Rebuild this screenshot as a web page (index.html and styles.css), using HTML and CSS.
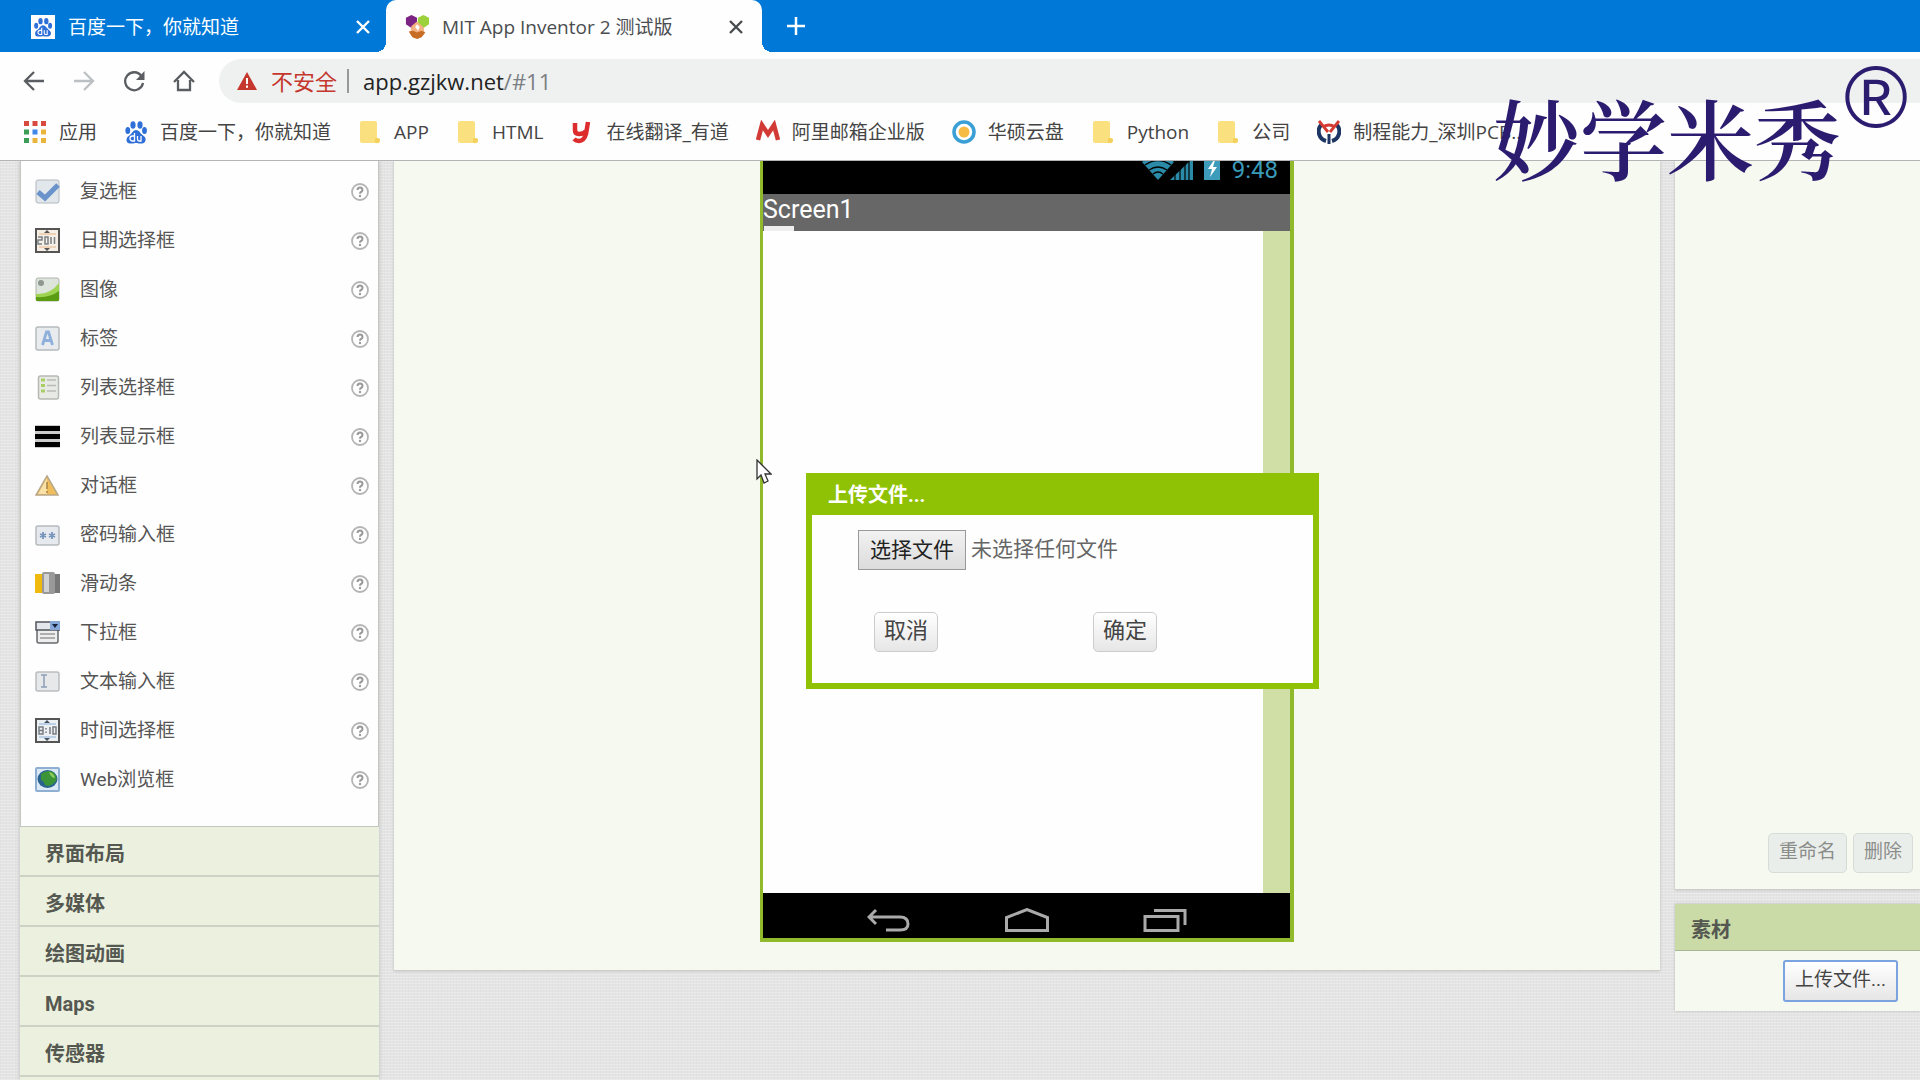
FILE: index.html
```html
<!DOCTYPE html>
<html lang="zh-CN">
<head>
<meta charset="utf-8">
<title>MIT App Inventor 2 测试版</title>
<link rel="stylesheet" href="styles.css">
</head>
<body>
<svg class="symbols" aria-hidden="true">
  <symbol id="folder" viewBox="0 0 24 24"><path d="M4 1h13q2 0 2 2v15q3 0 3 3t-4 2H4q-2 0-2-2V3q0-2 2-2z" fill="#fbe07f"/><path d="M19 18q-3 0-2 5 5 0 5-3 0-2-3-2z" fill="#f3d05c"/></symbol>
  <symbol id="paw" viewBox="0 0 24 24"><g fill="#2f6fd8"><ellipse cx="9" cy="5" rx="2.6" ry="3.8"/><ellipse cx="16" cy="5" rx="2.6" ry="3.8"/><ellipse cx="3.8" cy="10.500" rx="2.400" ry="3.500"/><ellipse cx="20.500" cy="10.500" rx="2.400" ry="3.500"/><path d="M12 10c3 0 4 3 6.500 5s3.500 3 3 5.500-2.500 3-5 3-3-.5-4.500-.5-2 .5-4.500.5-5-.5-5-3.500 1.500-3.500 3.500-5 3-5 6-5z"/></g><path d="M10.500 13v8H8.500a2 2 0 0 1 0-5h2M13.500 16v3q0 2 1.500 2h2v-5" fill="none" stroke="#fff" stroke-width="1.300"/></symbol>
  <symbol id="help" viewBox="0 0 18 18"><circle cx="9" cy="9" r="8" fill="#fff" stroke="#b4b4b4" stroke-width="1.800"/><path d="M6.500 7q0-2.500 2.500-2.500T11.500 7q0 1.300-1.500 2-1 .5-1 1.700" fill="none" stroke="#999" stroke-width="2"/><circle cx="9" cy="13" r="1.200" fill="#999"/></symbol>
  <symbol id="close" viewBox="0 0 14 14"><path d="M1 1l12 12M13 1L1 13" stroke="currentColor" stroke-width="2.400" fill="none"/></symbol>
</svg>

<header class="browser">
  <nav class="tabs">
    <div class="tab">
      <svg class="icon" viewBox="0 0 24 24"><path fill="#fff" d="M0 0h24v24H0z"/><use href="#paw" x="2" y="2" width="20" height="20"/></svg>
      <span class="tab-title">百度一下，你就知道</span>
      <button class="tab-close" aria-label="关闭"><svg><use href="#close"/></svg></button>
    </div>
    <div class="tab active">
      <svg class="icon" viewBox="0 0 26 26"><path d="M1 3l6-3 6 3v7l-6 4-6-4z" fill="#7b2382"/><path d="M14 3l6-3 6 3v7l-6 4-6-4z" fill="#9bd13a"/><path d="M7 12l6-5 7 6 1 5-7 8-8-8z" fill="#f1b183"/><path d="M4 18l5-1 4 2 5-2 4 2-4 5-5 2-5-2z" fill="#c76c24"/><path d="M11 13l2-3 3 3-2 4z" fill="#fff"/></svg>
      <span class="tab-title">MIT App Inventor 2 测试版</span>
      <button class="tab-close" aria-label="关闭"><svg><use href="#close"/></svg></button>
    </div>
    <button class="new-tab" aria-label="新标签页"><svg viewBox="0 0 20 20"><path d="M10 1v18M1 10h18" stroke="#fff" stroke-width="2.500"/></svg></button>
  </nav>

  <div class="toolbar">
    <button aria-label="后退"><svg viewBox="0 0 22 22"><path d="M21 11H2M11 2l-9 9 9 9" fill="none" stroke="#5a5d61" stroke-width="2.300"/></svg></button>
    <button aria-label="前进"><svg viewBox="0 0 22 22"><path d="M1 11h19M11 2l9 9-9 9" fill="none" stroke="#bdc0c3" stroke-width="2.300"/></svg></button>
    <button aria-label="刷新"><svg viewBox="0 0 22 22"><path d="M18.500 6A9 9 0 1 0 20 13" fill="none" stroke="#5a5d61" stroke-width="2.300"/><path d="M21.500 1v9H13z" fill="#5a5d61"/></svg></button>
    <button aria-label="主页"><svg viewBox="0 0 22 22"><path d="M1 12L11 2l10 10M5 10v10h12V10" fill="none" stroke="#5a5d61" stroke-width="2.300"/></svg></button>
    <div class="omnibox">
      <svg class="warning" viewBox="0 0 20 18"><path d="M10 0l10 18H0z" fill="#c5372c"/><path d="M10 6v6M10 13.500v2.200" stroke="#fff" stroke-width="2"/></svg>
      <span class="insecure">不安全</span>
      <span class="url">app.gzjkw.net<span class="url-path">/#11</span></span>
    </div>
  </div>

  <nav class="bookmarks">
    <a href="#"><svg class="icon" viewBox="0 0 24 24"><path fill="#d84a3d" d="M1 1h5v5H1zM9.500 1h5v5h-5zM18 1h5v5h-5z"/><path fill="#3c9d57" d="M1 9.500h5v5H1zM1 18h5v5H1z"/><path fill="#3f86e8" d="M9.500 9.500h5v5h-5z"/><path fill="#e9b53a" d="M18 9.500h5v5h-5zM9.500 18h5v5h-5zM18 18h5v5h-5z"/></svg>应用</a>
    <a href="#"><svg class="icon"><use href="#paw"/></svg>百度一下，你就知道</a>
    <a href="#"><svg class="icon"><use href="#folder"/></svg>APP</a>
    <a href="#"><svg class="icon"><use href="#folder"/></svg>HTML</a>
    <a href="#"><svg class="icon" viewBox="0 0 24 24"><path d="M5 3v7q0 4 4 4 5 0 7-3M18 2l-2 12q-2 7-7 7-3 0-5-2" fill="none" stroke="#dd2c2c" stroke-width="4.500"/></svg>在线翻译_有道</a>
    <a href="#"><svg class="icon" viewBox="0 0 24 24"><path d="M2 20L6 5l6 9 6-9 4 15" fill="none" stroke="#d23a35" stroke-width="4.500"/></svg>阿里邮箱企业版</a>
    <a href="#"><svg class="icon" viewBox="0 0 24 24"><circle cx="12" cy="12" r="10" fill="#fff" stroke="#3a9fd4" stroke-width="3.500"/><circle cx="12" cy="12" r="5.500" fill="#f5bb45"/></svg>华硕云盘</a>
    <a href="#"><svg class="icon"><use href="#folder"/></svg>Python</a>
    <a href="#"><svg class="icon"><use href="#folder"/></svg>公司</a>
    <a href="#"><svg class="icon" viewBox="0 0 24 24"><path d="M4 5a10 10 0 0 0 5 16M20 5a10 10 0 0 1-5 16" fill="none" stroke="#1d3563" stroke-width="4"/><path d="M2 1l9 11M22 1l-9 11M6 7q6-4 12 0" fill="none" stroke="#d53a32" stroke-width="2.800"/><path d="M12 14v10" stroke="#1d3563" stroke-width="3"/></svg>制程能力_深圳PCB...</a>
  </nav>
</header>

<main class="designer">
  <aside class="palette">
    <ul class="components">
      <li><svg class="glyph" viewBox="0 0 25 25"><rect x="1" y="1" width="23" height="23" rx="2" fill="#e2e7ec" stroke="#b2b8be"/><path d="M3 13l7 6L23 6" fill="none" stroke="#6a93cc" stroke-width="5"/></svg><span>复选框</span><button aria-label="帮助"><svg><use href="#help"/></svg></button></li>
      <li><svg class="glyph" viewBox="0 0 25 25"><rect x="1" y="1" width="23" height="23" fill="#f6efe6" stroke="#555" stroke-width="2"/><path d="M4 6h17M4 19h17" stroke="#e8b78c"/><path d="M12 2l3 3H9zM12 23l3-3H9z" fill="#555"/><path d="M3 9h4v3H3v4h4M10 9h3v7h-3zM16 9v7M19.500 9v7" fill="none" stroke="#7a8188" stroke-width="1.500"/></svg><span>日期选择框</span><button aria-label="帮助"><svg><use href="#help"/></svg></button></li>
      <li><svg class="glyph" viewBox="0 0 25 25"><rect x="1" y="1" width="23" height="23" rx="2" fill="#dce4dc" stroke="#b0b5ae"/><path d="M1 17q14 1 23-11v17q0 1-1 1H2q-1 0-1-1z" fill="#9fd352"/><path d="M1 20q14 1 23-6v9q0 1-1 1H2q-1 0-1-1z" fill="#5a9d12"/><circle cx="6" cy="6" r="3" fill="#8f9690"/></svg><span>图像</span><button aria-label="帮助"><svg><use href="#help"/></svg></button></li>
      <li><svg class="glyph" viewBox="0 0 25 25"><rect x="1" y="1" width="23" height="23" rx="2" fill="#e9ecee" stroke="#b5babd" stroke-width="1.500"/><path d="M7.500 19L11.500 6h2l4 13M9 14.500h7" fill="none" stroke="#8fb0da" stroke-width="2.800"/></svg><span>标签</span><button aria-label="帮助"><svg><use href="#help"/></svg></button></li>
      <li><svg class="glyph" viewBox="0 0 25 25"><rect x="3.500" y="1" width="20" height="23" rx="2" fill="#e8eae6" stroke="#b5b9b2" stroke-width="1.500"/><path d="M6 5h4M6 10.500h4M6 16h4" stroke="#a9cf62" stroke-width="3"/><path d="M12 5h9M12 10.500h9M12 16h9" stroke="#b8bcb8" stroke-width="1.500"/></svg><span>列表选择框</span><button aria-label="帮助"><svg><use href="#help"/></svg></button></li>
      <li><svg class="glyph" viewBox="0 0 25 25"><path fill="#ccc" d="M0 1h25v23H0z"/><path fill="#000" d="M0 2h25v5H0zM0 10h25v5H0zM0 18h25v5H0z"/></svg><span>列表显示框</span><button aria-label="帮助"><svg><use href="#help"/></svg></button></li>
      <li><svg class="glyph" viewBox="0 0 25 25"><path d="M12 3l11 19H1z" fill="#f0bd5c" stroke="#b9a889" stroke-width="1.500"/><path d="M7 14L12 5v16H3z" fill="#fae1a8"/><path d="M12 9v7M12 18v2" stroke="#a88245" stroke-width="1.500"/></svg><span>对话框</span><button aria-label="帮助"><svg><use href="#help"/></svg></button></li>
      <li><svg class="glyph" viewBox="0 0 25 25"><rect x="1" y="4" width="23" height="19" rx="2" fill="#e6eaee" stroke="#b5babd" stroke-width="1.500"/><path d="M8 10v7M5 12l6 3M5 15l6-3M17 10v7M14 12l6 3M14 15l6-3" stroke="#7795bd" stroke-width="1.800"/></svg><span>密码输入框</span><button aria-label="帮助"><svg><use href="#help"/></svg></button></li>
      <li><svg class="glyph" viewBox="0 0 25 25"><path fill="#f0b90d" d="M0 3h8v19H0z"/><path fill="#777" d="M18 3h7v19h-7z"/><rect x="7" y="1" width="13" height="22" rx="2" fill="#999"/><path fill="#d2d2d2" d="M9 3h5v18H9z"/></svg><span>滑动条</span><button aria-label="帮助"><svg><use href="#help"/></svg></button></li>
      <li><svg class="glyph" viewBox="0 0 25 25"><rect x="2" y="9" width="21" height="14" rx="2" fill="#eee" stroke="#65696e" stroke-width="1.500"/><path d="M5 14h15M5 18h15" stroke="#999" stroke-width="1.500"/><path d="M1 2h24v8H1z" fill="#e3e6ea" stroke="#50555c" stroke-width="1.500"/><path d="M15 1h10v9H15z" fill="#86a7d8"/><path d="M17 4h6l-3 4z" fill="#14213c"/></svg><span>下拉框</span><button aria-label="帮助"><svg><use href="#help"/></svg></button></li>
      <li><svg class="glyph" viewBox="0 0 25 25"><rect x="1" y="3" width="23" height="19" rx="2" fill="#e6e8ea" stroke="#babdc0" stroke-width="1.500"/><path d="M6 6h6M6 18h6M9 6v12" stroke="#8e9fb9" stroke-width="1.500"/></svg><span>文本输入框</span><button aria-label="帮助"><svg><use href="#help"/></svg></button></li>
      <li><svg class="glyph" viewBox="0 0 25 25"><rect x="1" y="1" width="23" height="23" fill="#edf1f4" stroke="#555" stroke-width="2"/><path d="M4 6h17M4 19h17" stroke="#8cb0d8"/><path d="M12 2l3 3H9zM12 23l3-3H9z" fill="#456"/><path d="M4 9h4v7H4zM4 12.500h4M15 9v7M18 9h3v7h-3zM11 10v1.500M11 13.500V15" fill="none" stroke="#777d82" stroke-width="1.500"/></svg><span>时间选择框</span><button aria-label="帮助"><svg><use href="#help"/></svg></button></li>
      <li><svg class="glyph" viewBox="0 0 25 25"><rect x="1" y="1" width="23" height="23" rx="1" fill="#dbe8f5" stroke="#8eaed2" stroke-width="2"/><ellipse cx="12.500" cy="12" rx="10" ry="9" fill="#2a6390"/><path d="M6 7q6-5 12-2 5 4 3 9-6 7-11 4-1-4-4-5z" fill="#3c9439"/><path d="M14 5q5 1 6 6-4 0-6-6z" fill="#8ccc58"/></svg><span>Web浏览框</span><button aria-label="帮助"><svg><use href="#help"/></svg></button></li>
    </ul>
    <button class="category">界面布局</button>
    <button class="category">多媒体</button>
    <button class="category">绘图动画</button>
    <button class="category">Maps</button>
    <button class="category">传感器</button>
  </aside>

  <section class="viewer">
    <div class="phone">
      <div class="status">
        <svg class="signals" viewBox="0 3 80 19"><path d="M0 4Q16-8 32 4L16 22z" fill="#2b8aa8"/><path d="M3 7q13-9 26 0M7 12q9-6 18 0M11 16q5-4 10 0" fill="none" stroke="#000" stroke-width="1.300"/><path d="M28 22L51 0v22z" fill="#2b8aa8"/><path d="M33 14v8M38 9v13M43 4v18M47 0v22" stroke="#000" stroke-width="1.200"/><path fill="#3d9cba" d="M62 0h16v22H62z"/><path d="M72 2l-6 9h4l-2 8 7-10h-4l2-7z" fill="#fff"/></svg>
        <span>9:48</span>
      </div>
      <div class="screen-title">Screen1</div>
      <div class="screen"><div class="canvas"></div></div>
      <div class="android-nav">
        <svg viewBox="0 0 44 24"><path d="M9 2L2 9l7 7M3 9h30q8 0 8 7 0 6-8 6H19" fill="none" stroke="#aaa" stroke-width="3"/></svg>
        <svg viewBox="0 0 44 24"><path d="M1.500 22.500V9.500L22 1.500l20.500 8v13z" fill="none" stroke="#aaa" stroke-width="3"/></svg>
        <svg viewBox="0 0 44 24"><path d="M2 8.500h33v14H2zM11 2.500h31V17" fill="none" stroke="#aaa" stroke-width="3"/></svg>
      </div>

      <form class="dialog" role="dialog" aria-labelledby="dialog-title">
        <h2 id="dialog-title">上传文件...</h2>
        <div class="file-row">
          <label class="file-button" for="upload">选择文件</label>
          <span>未选择任何文件</span>
          <input type="file" id="upload">
        </div>
        <div class="actions">
          <button type="button" class="button">取消</button>
          <button type="button" class="button">确定</button>
        </div>
      </form>

      <svg class="cursor" viewBox="0 0 16 25"><path d="M1 1v19l4-4 3 8 4-2-3-7h6z" fill="#fff" stroke="#333" stroke-width="1.300"/></svg>
    </div>
  </section>

  <aside class="side">
    <section class="tree">
      <button class="button small" disabled>重命名</button>
      <button class="button small" disabled>删除</button>
    </section>
    <section class="assets">
      <h2>素材</h2>
      <div class="assets-body"><button class="button small focused">上传文件...</button></div>
    </section>
  </aside>
</main>

<div class="watermark"><span>妙学米秀</span><span class="registered">®</span></div>
</body>
</html>
```
FILE: styles.css
```css
* { box-sizing: border-box; }

body {
  margin: 0;
  height: 100vh;
  display: flex;
  flex-direction: column;
  overflow: hidden;
  position: relative;
  font-family: "Open Sans", "Noto Sans CJK SC", sans-serif;
  font-size: 19px;
  line-height: 24px;
  color: #444;
}

button { font: inherit; color: inherit; border: 0; padding: 0; background: none; }
h2 { margin: 0; }
svg { display: block; flex: none; }
.symbols { position: absolute; width: 0; height: 0; }
.icon { width: 24px; height: 24px; }

/* Browser chrome */
.browser { flex: none; background: #fefefe; border-bottom: 1px solid #b4b4b6; }

.tabs { display: flex; height: 52px; background: #0078d7; }
.tab {
  display: flex;
  align-items: center;
  width: 386px;
  padding: 2px 16px 0 31px;
  color: #fff;
}
.tab.active {
  position: relative;
  width: 376px;
  padding: 2px 19px 0;
  background: #fefefe;
  color: #4a4d50;
  border-radius: 10px 10px 0 0;
}
.tab.active::before,
.tab.active::after {
  content: "";
  position: absolute;
  bottom: 0;
  width: 10px;
  height: 10px;
}
.tab.active::before { left: -10px; background: radial-gradient(circle at 0 0, transparent 10px, #fefefe 10px); }
.tab.active::after { right: -10px; background: radial-gradient(circle at 100% 0, transparent 10px, #fefefe 10px); }
.tab-title { flex: 1; padding-left: 13px; white-space: nowrap; }
.tab-close svg { width: 14px; height: 14px; }
.new-tab { padding: 0 24px; }
.new-tab svg { width: 20px; height: 20px; }

.toolbar {
  display: flex;
  align-items: center;
  gap: 28px;
  height: 52px;
  margin-top: 3px;
  padding-left: 23px;
}
.toolbar button svg { width: 22px; height: 22px; }
.omnibox {
  display: flex;
  flex: 1;
  align-items: center;
  height: 44px;
  margin-left: -4px;
  padding-left: 18px;
  background: #eff1f1;
  border-radius: 22px 0 0 22px;
  font-size: 22px;
}
.warning { width: 20px; height: 18px; }
.insecure {
  margin: 0 14px;
  padding-right: 10px;
  border-right: 2px solid #999;
  color: #c5372c;
}
.url { color: #222; }
.url-path { color: #7b7f83; }

.bookmarks {
  display: flex;
  align-items: center;
  gap: 27px;
  height: 53px;
  padding: 0 0 3px 23px;
}
.bookmarks a {
  display: flex;
  align-items: center;
  gap: 12px;
  color: #444;
  text-decoration: none;
  white-space: nowrap;
}

/* Designer workspace */
.designer {
  flex: 1;
  min-height: 0;
  display: grid;
  grid-template-columns: 359px 1fr 245px;
  gap: 15px;
  padding-left: 20px;
  overflow: hidden;
  background:
    repeating-linear-gradient(0deg, rgba(255, 255, 255, .25) 0 1px, transparent 1px 3px),
    repeating-linear-gradient(90deg, rgba(0, 0, 0, .02) 0 1px, transparent 1px 3px),
    #e4e4e5;
}

.palette {
  background: #ebf1de;
  font-family: Roboto, "Noto Sans CJK SC", sans-serif;
  box-shadow: 0 0 4px #bbb;
}
.components {
  margin: 0;
  padding: 6px 9px 22px 14px;
  list-style: none;
  background: #fefefe;
  border: solid #c3c7c0;
  border-width: 0 1px 1px;
  color: #555;
}
.components li { display: flex; align-items: center; height: 49px; }
.components span { flex: 1; padding-left: 20px; }
.glyph { width: 25px; height: 25px; }
.components button svg { width: 18px; height: 18px; }
.category {
  display: block;
  width: 100%;
  height: 50px;
  padding: 6px 0 0 25px;
  border-bottom: 2px solid #cdd2c6;
  text-align: left;
  font-size: 20px;
  font-weight: 700;
  color: #555850;
}

.viewer {
  align-self: start;
  display: flex;
  justify-content: center;
  padding-bottom: 28px;
  background: #f5f9ef;
  border-bottom: 1px solid #ccc;
  box-shadow: 0 0 3px #bbb;
}
.phone {
  position: relative;
  width: 534px;
  border: solid #90b92b;
  border-width: 0 4px 4px 3px;
  font-family: Roboto, "Noto Sans CJK SC", sans-serif;
}
.status {
  display: flex;
  justify-content: flex-end;
  gap: 10px;
  height: 33px;
  padding-right: 12px;
  background: #000;
  color: #3a9ab8;
  font-size: 24px;
  line-height: 18px;
}
.signals { width: 80px; height: 19px; }
.screen-title {
  position: relative;
  height: 37px;
  background: #676767;
  color: #fff;
  font-size: 25px;
  line-height: 32px;
}
.screen-title::after {
  content: "";
  position: absolute;
  left: 1px;
  bottom: 0;
  width: 30px;
  height: 5px;
  background: #eee;
}
.screen { padding-right: 27px; background: #d0dfa5; }
.canvas { height: 662px; background: #fefefe; }
.android-nav {
  display: flex;
  justify-content: center;
  gap: 94px;
  height: 45px;
  padding-top: 15px;
  background: #000;
}
.android-nav svg { width: 44px; height: 24px; }

.dialog {
  position: absolute;
  left: 43px;
  top: 312px;
  width: 513px;
  padding-bottom: 31px;
  background: #fefefe;
  border: 6px solid #8fc204;
  border-top: 0;
}
.dialog h2 {
  height: 42px;
  padding-left: 16px;
  background: #8fc204;
  color: #fff;
  font-size: 20px;
  line-height: 44px;
}
.file-row {
  position: relative;
  display: flex;
  gap: 5px;
  margin: 15px 46px 0;
  font-size: 21px;
  line-height: 38px;
  color: #666;
}
.file-row input { position: absolute; inset: 0; opacity: 0; }
.file-button {
  padding: 0 11px;
  border: 1px solid #999;
  background: linear-gradient(#f2f2f2, #dcdcdc);
  color: #222;
}
.actions { display: flex; gap: 155px; margin: 42px 62px 0; }

.button {
  height: 40px;
  padding: 0 9px 2px;
  border: 1px solid #ccc;
  border-radius: 5px;
  background: linear-gradient(#fff, #e6e6e6);
  font-size: 22px;
  color: #444;
  white-space: nowrap;
}
.button.small { padding: 0 10px 2px; font-size: 19px; }
.button:disabled { background: #eaeeea; border-color: #d8dcd8; color: #8a8d8a; }
.button.focused { height: 42px; border: 2px solid #7ba3e0; border-radius: 3px; }

.cursor {
  position: absolute;
  left: -7px;
  top: 298px;
  width: 16px;
  height: 25px;
}

.side { font-family: Roboto, "Noto Sans CJK SC", sans-serif; }
.tree {
  display: flex;
  justify-content: flex-end;
  align-items: flex-end;
  gap: 6px;
  height: 729px;
  padding: 0 7px 16px;
  background: #f5f9ef;
  border-bottom: 1px solid #ccc;
  box-shadow: 0 0 3px #bbb;
}
.assets { margin-top: 14px; background: #f5f9ef; box-shadow: 0 0 3px #bbb; }
.assets h2 {
  height: 47px;
  padding-left: 16px;
  border-bottom: 1px solid #a9b894;
  background: #cadba8;
  font-size: 20px;
  line-height: 52px;
  color: #555850;
}
.assets-body { display: flex; justify-content: flex-end; padding: 9px 22px; }

.watermark {
  position: absolute;
  top: 53px;
  right: 12px;
  display: flex;
  align-items: flex-start;
  gap: 3px;
  color: #2b1c70;
  font-family: "Noto Serif CJK SC", "Noto Sans CJK SC", serif;
  font-size: 87px;
  font-weight: 600;
  line-height: 87px;
  pointer-events: none;
}
.watermark span:first-child { padding-top: 40px; }
.registered { font-family: "Liberation Sans", sans-serif; font-weight: 400; }
```
